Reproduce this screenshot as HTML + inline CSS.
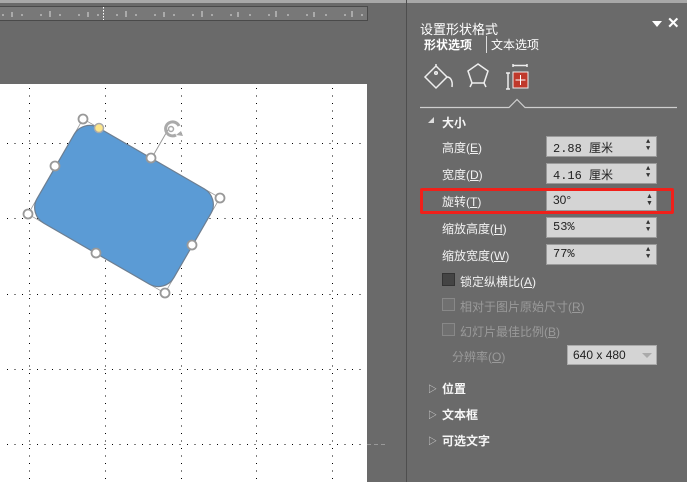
<!DOCTYPE html>
<html><head><meta charset="utf-8"><style>
*{margin:0;padding:0;box-sizing:border-box}
body{width:687px;height:482px;overflow:hidden;background:#6a6a6a;position:relative;font-family:"Liberation Sans","Noto Sans CJK SC",sans-serif;font-size:12px;color:#fff}
.a{position:absolute}
.lbl{position:absolute;left:442px;color:#f2f2f2;font-size:12px}
.box{position:absolute;left:546px;width:111px;height:21px;background:#d4d4d4;border:1px solid #9a9a9a;color:#222;font-family:"Liberation Mono","Noto Sans CJK SC",monospace;font-size:12px;padding:2px 0 0 6px}
.sp{position:absolute;right:4px;top:2px;width:6px;font-size:7px;line-height:7px;color:#333}
.cb{position:absolute;left:442px;width:13px;height:13px;border:1px solid #555}
.sec{position:absolute;left:442px;font-weight:bold;font-size:12px;color:#f5f5f5}
.tri{position:absolute;left:428px;font-size:9px;color:#ddd}
</style></head><body>
<div class="a" style="left:0;top:0;width:687px;height:3px;background:#a8a8a8"></div>
<div class="a" style="left:0;top:6px;width:368px;height:15px;background:#787878;border:1px solid #4a4a4a;border-left:none"></div>
<svg class="a" style="left:0;top:6px" width="368" height="15">
<g stroke="#ddd" stroke-width="1">
<path d="M12 6v5M50 5v6M88 6v5M126 5v6M164 6v5M202 5v6M238 6v5M276 5v6M314 6v5M352 5v6"/>
<path d="M3 8v2M22 8v2M41 8v2M60 8v2M79 8v2M98 8v2M117 8v2M136 8v2M155 8v2M174 8v2M193 8v2M212 8v2M231 8v2M250 8v2M269 8v2M288 8v2M307 8v2M326 8v2M345 8v2M362 8v2"/>
<path d="M103.5 1v13" stroke="#fff" stroke-dasharray="1.5 1.5"/>
</g></svg>
<div class="a" style="left:0;top:84px;width:367px;height:398px;background:#fff"></div>
<div class="a" style="left:406px;top:0;width:1px;height:482px;background:#4e4e4e"></div>
<svg class="a" style="left:0;top:84px" width="400" height="398">
<g stroke="#000" stroke-width="1" stroke-dasharray="1 6.5">
<path d="M29.5 4V398M105.5 4V398M181.5 4V398M256.5 4V398M332.5 4V398"/>
<path d="M7 59.5H364M7 134.5H364M7 210.5H364M7 285.5H364M7 360.5H364"/>
</g>
<path d="M367 360.5H388" stroke="#999" stroke-dasharray="4 3"/>
<g transform="translate(124 122) rotate(30)">
<path d="M0 -55V-88" stroke="#999" stroke-width="1" transform="rotate(0)"/>
<rect x="-79" y="-55" width="158" height="110" fill="none" stroke="#999" stroke-width="0.8"/>
<rect x="-79" y="-55" width="158" height="110" rx="18" fill="#5b9bd5" stroke="#6d7f92" stroke-width="1.2"/>
</g>
<g fill="#fff" stroke="#999" stroke-width="1.8">
<circle cx="83" cy="35" r="4.5"/><circle cx="151" cy="74" r="4.5"/><circle cx="220" cy="114" r="4.5"/>
<circle cx="55" cy="82" r="4.5"/><circle cx="192" cy="161" r="4.5"/>
<circle cx="28" cy="130" r="4.5"/><circle cx="96" cy="169" r="4.5"/><circle cx="165" cy="209" r="4.5"/>
</g>
<circle cx="99" cy="44" r="4.5" fill="#fde68a" stroke="#aaa" stroke-width="1.5"/>
<path d="M176 51a7 7 0 1 1 3 -9" fill="none" stroke="#aaa" stroke-width="3"/>
<circle cx="171" cy="45" r="2.5" fill="none" stroke="#aaa" stroke-width="1.5"/>
<path d="M176 51l7 1-2-5z" fill="#aaa"/>
</svg>

<div class="a" style="left:420px;top:19px;font-size:13px;color:#fff">设置形状格式</div>
<div class="a" style="left:652px;top:21px;width:0;height:0;border-left:5px solid transparent;border-right:5px solid transparent;border-top:6px solid #fff"></div>
<div class="a" style="left:667px;top:14px;font-size:15px;font-weight:bold;color:#fff">✕</div>
<div class="a" style="left:424px;top:36px;font-size:12px;font-weight:bold;color:#fff">形状选项</div>
<div class="a" style="left:486px;top:36px;width:1px;height:17px;background:#ddd"></div>
<div class="a" style="left:491px;top:36px;font-size:12px;color:#fff">文本选项</div>
<svg class="a" style="left:420px;top:58px" width="267" height="52">
<g fill="none" stroke="#eee" stroke-width="1.5">
<path d="M16 8l11 11-11 11-11-11z"/><path d="M16 8v-2M16 6a3 3 0 0 1 0 0"/><circle cx="16" cy="15" r="1.3"/>
<path d="M27 19c3 0 6 3 5 10"/>
<path d="M58 6l10 7-4 12h-12l-4-12z"/><path d="M52 25l-2 4M64 25l2 4"/>
<path d="M88 15v16M86 15h4M86 31h4M93 9v-3M107 9v-3M93 7.5h14"/>
</g>
<rect x="93" y="14" width="15" height="16" fill="#c0392b" stroke="#eee" stroke-width="1"/>
<path d="M100.5 17v10M95.5 22h10" stroke="#fff" stroke-width="1"/>
<path d="M0 49.5H89l8-8 8 8H257" fill="none" stroke="#cfcfcf" stroke-width="1.2"/>
</svg>
<div class="a" style="left:428px;top:117px;width:0;height:0;border-left:6px solid transparent;border-bottom:6px solid #ddd"></div>
<div class="sec" style="top:114px">大小</div>

<div class="lbl" style="top:139px">高度(<u>E</u>)</div>
<div class="box" style="top:136px">2.88 厘米<div class="sp">▲<br>▼</div></div>
<div class="lbl" style="top:166px">宽度(<u>D</u>)</div>
<div class="box" style="top:163px">4.16 厘米<div class="sp">▲<br>▼</div></div>
<div class="lbl" style="top:193px">旋转(<u>T</u>)</div>
<div class="box" style="top:190px;font-family:'Liberation Sans',sans-serif">30°<div class="sp">▲<br>▼</div></div>
<div class="lbl" style="top:220px">缩放高度(<u>H</u>)</div>
<div class="box" style="top:217px">53%<div class="sp">▲<br>▼</div></div>
<div class="lbl" style="top:247px">缩放宽度(<u>W</u>)</div>
<div class="box" style="top:244px">77%<div class="sp">▲<br>▼</div></div>
<div class="a" style="left:420px;top:188px;width:254px;height:26px;border:3px solid #f0201a;border-radius:2px"></div>

<div class="cb" style="top:273px;background:#444;border-color:#333"></div>
<div class="lbl" style="left:460px;top:273px">锁定纵横比(<u>A</u>)</div>
<div class="cb" style="top:298px;background:#707070;border-color:#888"></div>
<div class="lbl" style="left:460px;top:298px;color:#9a9a9a">相对于图片原始尺寸(<u>R</u>)</div>
<div class="cb" style="top:323px;background:#707070;border-color:#888"></div>
<div class="lbl" style="left:460px;top:323px;color:#9a9a9a">幻灯片最佳比例(<u>B</u>)</div>
<div class="lbl" style="left:452px;top:348px;color:#9a9a9a">分辨率(<u>O</u>)</div>
<div class="a" style="left:567px;top:345px;width:90px;height:20px;background:#d4d4d4;border:1px solid #aaa;color:#222;padding:2px 0 0 5px;font-size:12px">640 x 480<div class="a" style="right:4px;top:7px;border-left:5px solid transparent;border-right:5px solid transparent;border-top:5px solid #aaa"></div></div>

<div class="tri" style="top:382px">▷</div><div class="sec" style="top:380px">位置</div>
<div class="tri" style="top:408px">▷</div><div class="sec" style="top:406px">文本框</div>
<div class="tri" style="top:434px">▷</div><div class="sec" style="top:432px">可选文字</div>
</body></html>
